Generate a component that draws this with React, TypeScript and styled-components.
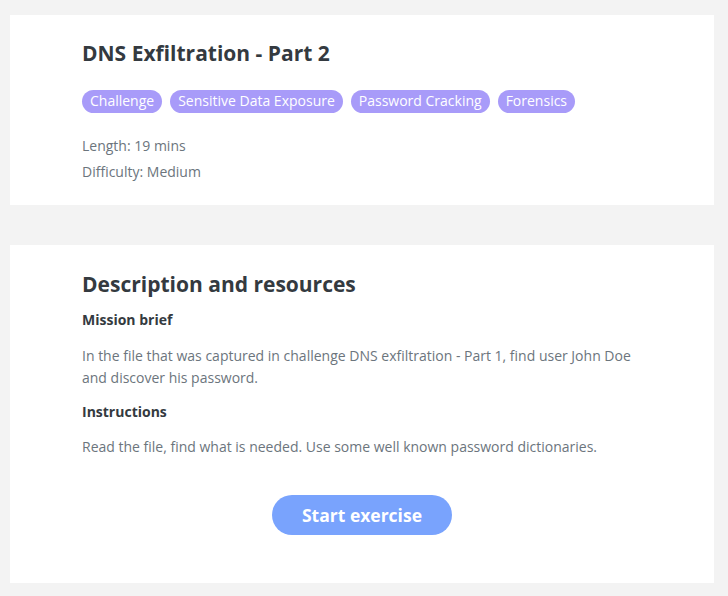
import React from "react";
import styled, { createGlobalStyle } from "styled-components";

const Global = createGlobalStyle`
  html, body { margin: 0; padding: 0; background: #f3f3f3; }
  body { font-family: "Open Sans", "Liberation Sans", sans-serif; }
  * { box-sizing: border-box; }
`;

const Page = styled.div`
  display: flex;
  flex-direction: column;
  gap: 40px;
  padding: 15px 14px 13px 10px;
`;

const Card = styled.section<{ $pt?: number; $pb?: number }>`
  background: #ffffff;
  padding: ${(p) => p.$pt ?? 24}px 72px ${(p) => p.$pb ?? 24}px 72px;
  display: flex;
  flex-direction: column;
`;

const Title = styled.h1`
  margin: 0;
  font-size: 21px;
  line-height: 28px;
  font-weight: 700;
  color: #343a40;
`;

const Tags = styled.div`
  display: flex;
  gap: 8px;
  margin-top: 23px;
`;

const Tag = styled.span`
  background: #a89bf9;
  color: #ffffff;
  font-size: 14px;
  line-height: 22px;
  height: 23px;
  padding: 0 8px;
  border-radius: 12px;
`;

const Meta = styled.div`
  margin-top: 20px;
  display: flex;
  flex-direction: column;
`;

const MetaLine = styled.div`
  font-size: 14px;
  line-height: 26px;
  color: #6c757d;
`;

const Heading = styled.h2`
  margin: 0;
  font-size: 21px;
  line-height: 30px;
  font-weight: 700;
  color: #343a40;
`;

const Sub = styled.h3<{ $mt: number }>`
  margin: ${(p) => p.$mt}px 0 0 0;
  font-size: 14px;
  line-height: 20px;
  font-weight: 700;
  color: #343a40;
`;

const Para = styled.p<{ $mt: number }>`
  margin: ${(p) => p.$mt}px 0 0 0;
  font-size: 14px;
  line-height: 22px;
  color: #6c757d;
  max-width: 560px;
`;

const ButtonRow = styled.div`
  display: flex;
  justify-content: center;
  margin-top: 37px;
`;

const Button = styled.button`
  width: 180px;
  height: 40px;
  border: none;
  border-radius: 20px;
  background: #79a3fd;
  color: #ffffff;
  font-family: "Open Sans", "Liberation Sans", sans-serif;
  font-size: 17.5px;
  font-weight: 700;
  cursor: pointer;
`;

export default function App() {
  return (
    <>
      <Global />
      <Page>
        <Card $pt={24} $pb={20}>
          <Title>DNS Exfiltration - Part 2</Title>
          <Tags>
            <Tag>Challenge</Tag>
            <Tag>Sensitive Data Exposure</Tag>
            <Tag>Password Cracking</Tag>
            <Tag>Forensics</Tag>
          </Tags>
          <Meta>
            <MetaLine>Length: 19 mins</MetaLine>
            <MetaLine>Difficulty: Medium</MetaLine>
          </Meta>
        </Card>
        <Card $pt={24} $pb={48}>
          <Heading>Description and resources</Heading>
          <Sub $mt={11}>Mission brief</Sub>
          <Para $mt={15}>
            In the file that was captured in challenge DNS exfiltration - Part 1, find user John Doe and discover his password.
          </Para>
          <Sub $mt={13}>Instructions</Sub>
          <Para $mt={14}>
            Read the file, find what is needed. Use some well known password dictionaries.
          </Para>
          <ButtonRow>
            <Button>Start exercise</Button>
          </ButtonRow>
        </Card>
      </Page>
    </>
  );
}
